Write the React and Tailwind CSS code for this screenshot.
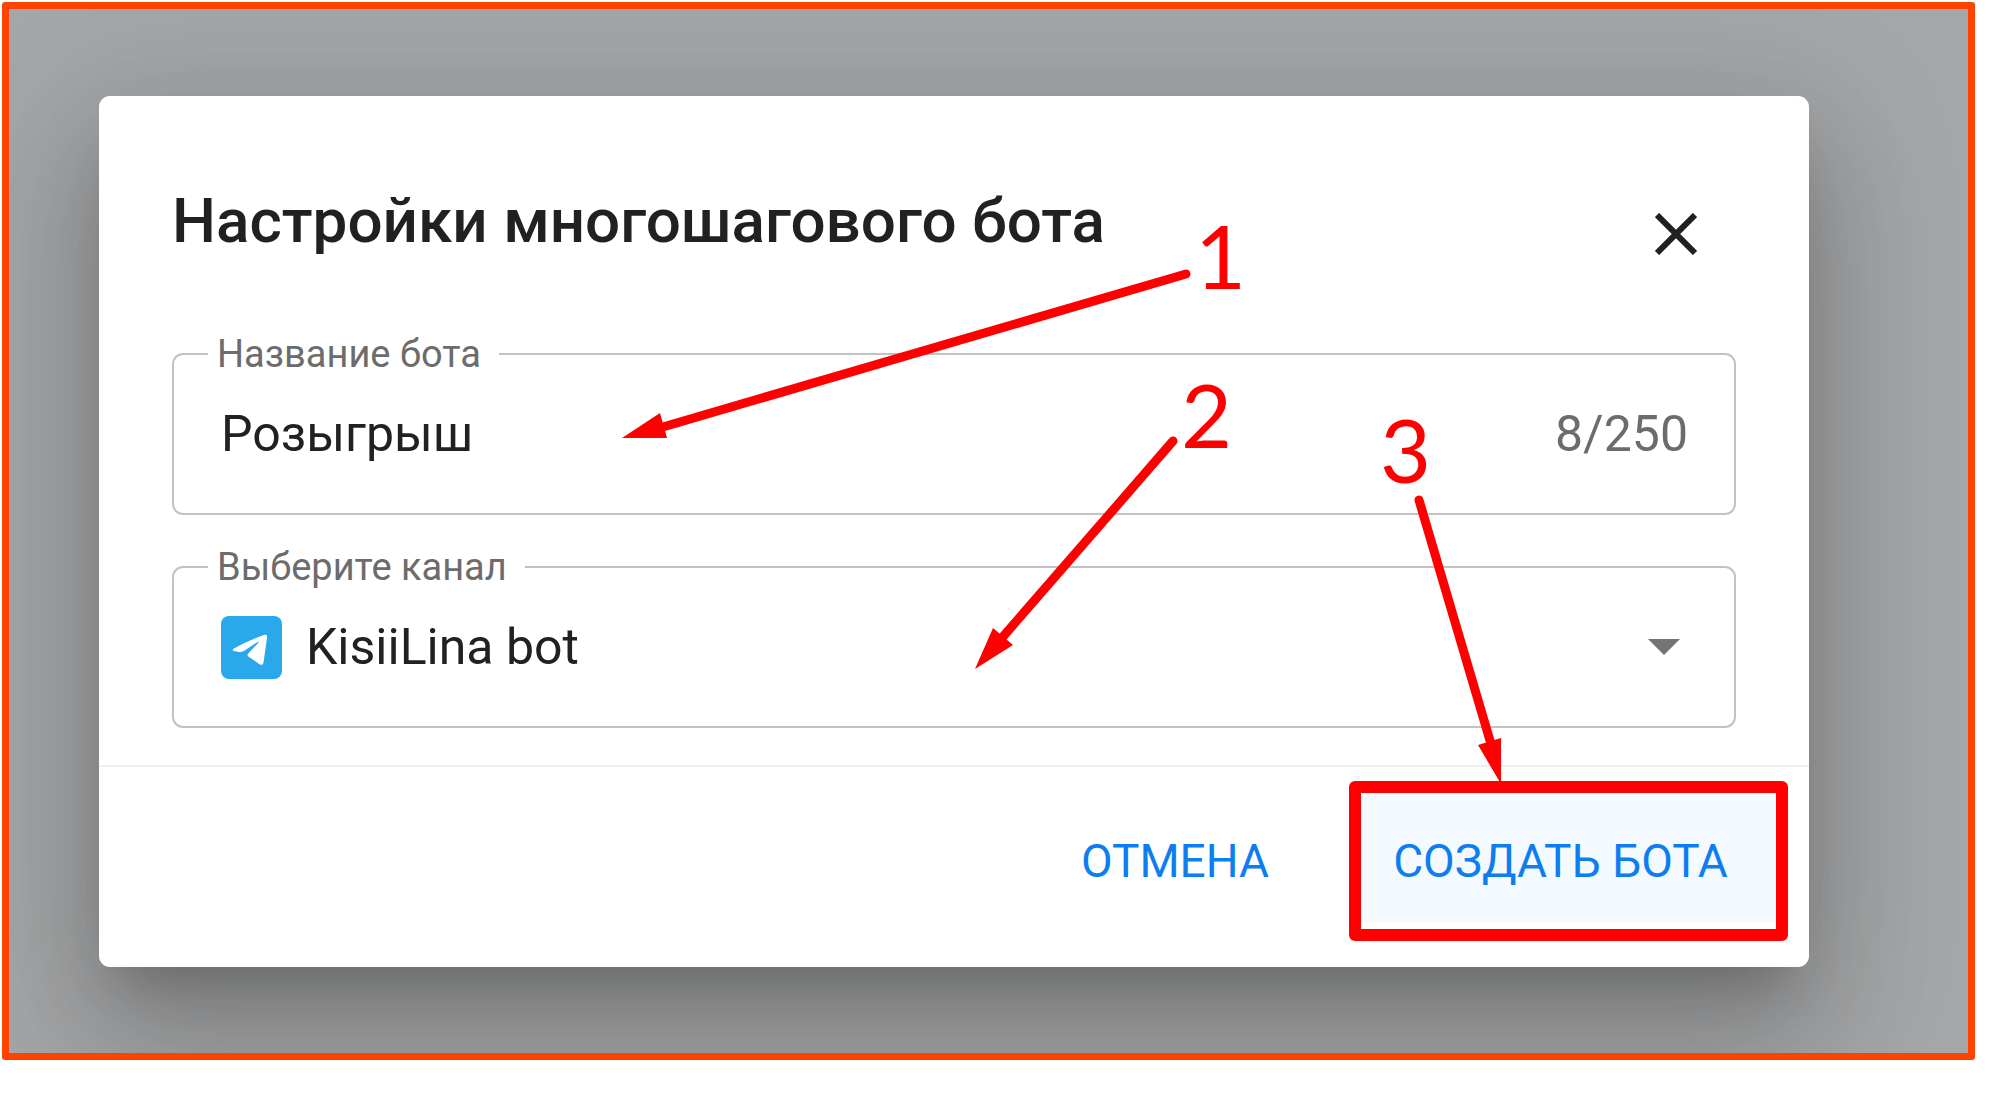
// App.jsx - Bot settings dialog with step annotations

import React, { useState } from 'react';

const CloseIcon = () => (
  <svg width="42" height="42" viewBox="0 0 42 42" fill="none" stroke="#212121" strokeWidth="6" aria-hidden="true">
    <path d="M2 2L40 40M40 2L2 40" />
  </svg>
);

const TelegramIcon = () => (
  <svg width="61" height="63" viewBox="0 0 61 63" className="shrink-0" aria-hidden="true">
    <rect width="61" height="63" rx="8" fill="#29a9eb" />
    <path
      d="M13 32.5C22 27.5 33 22.5 43.5 18.8C45.6 18.2 46.3 19.2 46.1 21.2L42.6 46C42.1 49 40.6 49.6 38.2 48L27.4 40.4C26.2 39.5 26.2 38.5 27.2 37.5L37 27.2C38 25.9 37.4 25.4 35.9 26.4L22.8 34.9C21.2 35.9 19.6 36.2 17.9 35.9L13 34.9C11.2 34.4 11.2 33.5 13 32.5Z"
      fill="#fff"
    />
  </svg>
);

const OutlinedField = ({ id, label, children }) => (
  <fieldset className="min-w-0 rounded-[11px] border-2 border-[#c2c2c2] pl-[34px] pr-[46px] pb-[19px]">
    <legend className="pl-[9px] pr-[18px] text-[38px] leading-[40px] text-[#6c6c6c]">
      <label htmlFor={id}>{label}</label>
    </legend>
    <div className="flex h-[120px] items-center pl-[13px] text-[50px] text-[#212121]">{children}</div>
  </fieldset>
);

const steps = [
  { number: 1, x: 1096, y: 193, line: 'M1087 178L557 333', head: '523,342 561,317 568,342' },
  { number: 2, x: 1082, y: 352, line: 'M1074 345L902 543', head: '876,573 894,532 914,549' },
  { number: 3, x: 1281, y: 387, line: 'M1320 404L1392 648', head: '1402,688 1379,649 1402,642' },
];

const Annotations = () => (
  <svg className="pointer-events-none absolute left-0 top-0 overflow-visible" width="1710" height="871">
    {steps.map((step) => (
      <g key={step.number} fill="#fe0000">
        <path d={step.line} stroke="#fe0000" strokeWidth="9" strokeLinecap="round" />
        <polygon points={step.head} />
        <text x={step.x} y={step.y} className="font-[Lato,sans-serif] text-[88px]">
          {step.number}
        </text>
      </g>
    ))}
  </svg>
);

const App = () => {
  const [name, setName] = useState('Розыгрыш');

  return (
    <div className="min-h-screen bg-white pt-[2px] pr-[27px] pb-10 pl-[2px] font-[Roboto,sans-serif]">
      <main className="overflow-hidden rounded-[3px] border-[7px] border-[#ff4200] bg-[#a5a6a7] pt-[87px] pr-[159px] pb-[86px] pl-[90px]">
        <div
          role="dialog"
          aria-labelledby="dialog-title"
          className="relative rounded-[11px] bg-white pt-[85px] shadow-[0_34px_47px_-22px_rgba(0,0,0,0.2),0_75px_119px_9px_rgba(0,0,0,0.14),0_28px_144px_25px_rgba(0,0,0,0.12)]"
        >
          {/* Header */}
          <header className="mx-[73px] mb-[60px] flex h-[93px] justify-between">
            <h1 id="dialog-title" className="text-[62px] leading-[80px] font-medium text-[#212121]">
              Настройки многошагового бота
            </h1>
            <button aria-label="Закрыть" className="mr-5 flex size-20 items-center justify-center self-end">
              <CloseIcon />
            </button>
          </header>

          {/* Fields */}
          <div className="mx-[73px] flex flex-col gap-8 pb-[37px]">
            <OutlinedField id="bot-name" label="Название бота">
              <input
                id="bot-name"
                value={name}
                maxLength={250}
                onChange={(e) => setName(e.target.value)}
                className="min-w-0 flex-1 bg-transparent outline-none"
              />
              <span className="text-[#6c6c6c]">{name.length}/250</span>
            </OutlinedField>

            <OutlinedField id="channel" label="Выберите канал">
              <TelegramIcon />
              <select id="channel" className="ml-6 min-w-0 flex-1 appearance-none bg-transparent outline-none">
                <option>KisiiLina bot</option>
              </select>
              <svg width="32" height="16" viewBox="0 0 32 16" className="mr-2" aria-hidden="true">
                <path d="M0 0H32L16 16Z" fill="#757575" />
              </svg>
            </OutlinedField>
          </div>

          {/* Actions */}
          <footer className="flex h-[202px] items-start justify-end gap-8 border-t-2 border-[#eeeeee] pt-[14px] pr-[21px] text-[46px] text-[#0d7df0]">
            <button className="h-[160px] px-12">ОТМЕНА</button>
            <div className="rounded-[6px] border-[12px] border-[#fe0000] pt-[3px] pb-[7px]">
              <button className="h-[126px] w-[415px] bg-[#f4faff] pt-1 pr-4">СОЗДАТЬ БОТА</button>
            </div>
          </footer>

          <Annotations />
        </div>
      </main>
    </div>
  );
};

export default App;
